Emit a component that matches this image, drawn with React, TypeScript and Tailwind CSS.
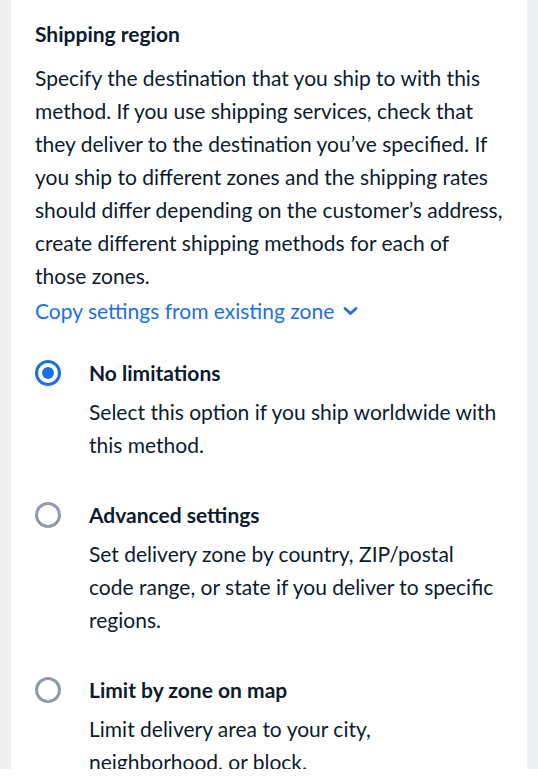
import React, { useState } from "react";

type Option = {
  id: string;
  title: string;
  text: string;
};

const options: Option[] = [
  {
    id: "none",
    title: "No limitations",
    text: "Select this option if you ship worldwide with this method.",
  },
  {
    id: "advanced",
    title: "Advanced settings",
    text: "Set delivery zone by country, ZIP/postal code range, or state if you deliver to specific regions.",
  },
  {
    id: "map",
    title: "Limit by zone on map",
    text: "Limit delivery area to your city, neighborhood, or block.",
  },
];

function Radio({ checked }: { checked: boolean }) {
  if (checked) {
    return (
      <span className="flex h-[26px] w-[26px] shrink-0 items-center justify-center rounded-full border-[3px] border-[#1f6fe6]">
        <span className="h-[12px] w-[12px] rounded-full bg-[#1f6fe6]" />
      </span>
    );
  }
  return <span className="h-[26px] w-[26px] shrink-0 rounded-full border-[3px] border-[#8f9ba6]" />;
}

export default function App() {
  const [selected, setSelected] = useState("none");

  return (
    <div className="h-[778px] bg-white font-['Lato','Noto_Sans',sans-serif] text-[#0d1b2e]">
      <div className="h-[769px] overflow-hidden bg-[#eff0f2] px-[11px]">
        <div className="bg-white px-6 pt-5 pb-[14px]">
          <h2 className="text-[21px] font-bold leading-[28px]">Shipping region</h2>
          <p className="mt-[13px] text-[21px] leading-[33px]">
            Specify the destination that you ship to with this method. If you use shipping services,
            check that they deliver to the destination you’ve specified. If you ship to different zones
            and the shipping rates should differ depending on the customer’s address, create different
            shipping methods for each of those zones.
          </p>
          <button className="mt-[2px] flex items-center gap-[9px] text-[21px] leading-[33px] text-[#1f6fe6]">
            Copy settings from existing zone
            <svg width="15" height="10" viewBox="0 0 15 10" fill="none">
              <path d="M2 2.5l5.5 5 5.5-5" stroke="currentColor" strokeWidth="2.8" strokeLinecap="round" strokeLinejoin="round" />
            </svg>
          </button>

          <div className="mt-[31px] flex flex-col gap-[39px]">
            {options.map((o) => (
              <label key={o.id} className="flex cursor-pointer gap-7" onClick={() => setSelected(o.id)}>
                <div className="flex h-[30px] items-center">
                  <Radio checked={selected === o.id} />
                </div>
                <div>
                  <div className="text-[21px] font-bold leading-[30px]">{o.title}</div>
                  <p className="mt-[7px] text-[21px] leading-[33px]">{o.text}</p>
                </div>
              </label>
            ))}
          </div>
        </div>
      </div>
    </div>
  );
}
